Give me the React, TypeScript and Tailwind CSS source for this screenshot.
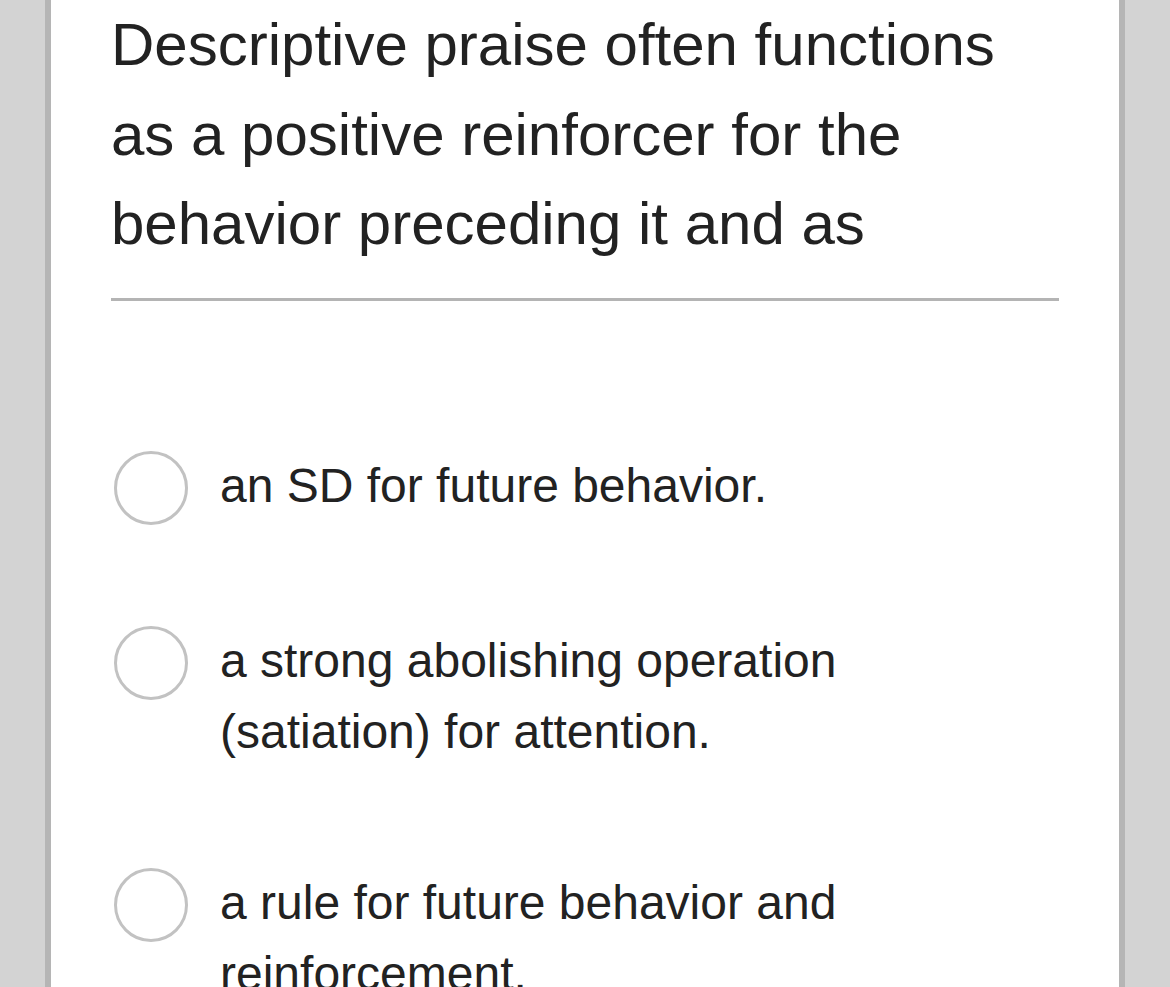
const options = [
  'an SD for future behavior.',
  'a strong abolishing operation (satiation) for attention.',
  'a rule for future behavior and reinforcement.',
]

const App = () => {
  return (
    <div
      className="h-[987px] overflow-hidden bg-[#d3d3d3] px-[45px]"
      style={{ fontFamily: '"Liberation Sans", Arial, Helvetica, sans-serif' }}
    >
      <div className="h-full border-x-[6px] border-[#b5b5b5] bg-white px-[60px] text-[#222222]">
        <h1 className="text-[60px] leading-[89.5px] font-normal">
          Descriptive praise often functions
          <br />
          as a positive reinforcer for the
          <br />
          behavior preceding it and as
        </h1>

        <div className="mt-[29px] h-[3px] bg-[#b4b4b4]" />

        <div className="mt-[149px] flex flex-col gap-[100px]">
          {options.map((option) => (
            <label key={option} className="flex items-start gap-[32px]">
              <span className="mt-[1px] ml-[3px] h-[74px] w-[74px] shrink-0 rounded-full border-[3px] border-[#c2c2c2]" />
              <span className="max-w-[660px] text-[48px] leading-[71px]">{option}</span>
            </label>
          ))}
        </div>
      </div>
    </div>
  )
}

export default App
